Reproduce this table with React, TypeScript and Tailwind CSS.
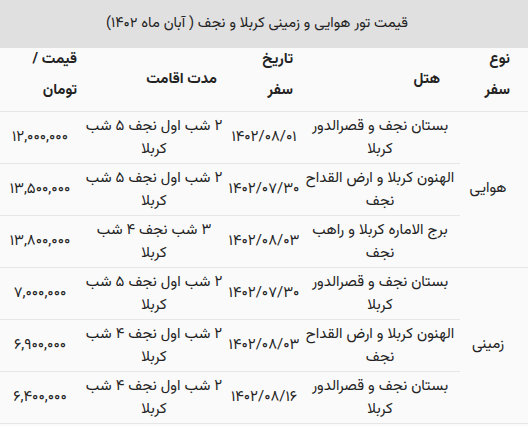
import React from "react";

type Row = { hotel: [string, string]; date: string; dur: [string, string]; price: string };

const air: Row[] = [
  { hotel: ["بستان نجف و قصرالدور", "کربلا"], date: "۱۴۰۲/۰۸/۰۱", dur: ["۲ شب اول نجف ۵ شب", "کربلا"], price: "۱۲,۰۰۰,۰۰۰" },
  { hotel: ["الهنون کربلا و ارض القداح", "نجف"], date: "۱۴۰۲/۰۷/۳۰", dur: ["۲ شب اول نجف ۵ شب", "کربلا"], price: "۱۳,۵۰۰,۰۰۰" },
  { hotel: ["برج الاماره کربلا و راهب", "نجف"], date: "۱۴۰۲/۰۸/۰۳", dur: ["۳ شب نجف ۴ شب", "کربلا"], price: "۱۳,۸۰۰,۰۰۰" },
];
const land: Row[] = [
  { hotel: ["بستان نجف و قصرالدور", "کربلا"], date: "۱۴۰۲/۰۷/۳۰", dur: ["۲ شب اول نجف ۵ شب", "کربلا"], price: "۷,۰۰۰,۰۰۰" },
  { hotel: ["الهنون کربلا و ارض القداح", "نجف"], date: "۱۴۰۲/۰۸/۰۳", dur: ["۲ شب اول نجف ۴ شب", "کربلا"], price: "۶,۹۰۰,۰۰۰" },
  { hotel: ["بستان نجف و قصرالدور", "کربلا"], date: "۱۴۰۲/۰۸/۱۶", dur: ["۲ شب اول نجف ۴ شب", "کربلا"], price: "۶,۴۰۰,۰۰۰" },
];

const cell = "h-[52px] border-b border-[#e6e6e6] flex flex-col items-center justify-center text-center leading-[23px] whitespace-nowrap";
const head = "h-[64px] border-b border-[#e6e6e6] flex flex-col justify-center items-start font-bold text-[15px] leading-[31px] whitespace-nowrap";

function Group({ label, rows }: { label: string; rows: Row[] }) {
  return (
    <>
      <div className="row-span-3 border-b border-[#e6e6e6] flex items-center justify-center pr-[12px]">{label}</div>
      {rows.map((r, i) => (
        <React.Fragment key={i}>
          <div className={cell}>
            <span>{r.hotel[0]}</span>
            <span>{r.hotel[1]}</span>
          </div>
          <div className={cell}>
            <span dir="ltr">{r.date}</span>
          </div>
          <div className={cell}>
            <span>{r.dur[0]}</span>
            <span>{r.dur[1]}</span>
          </div>
          <div className={cell}>
            <span>{r.price}</span>
          </div>
        </React.Fragment>
      ))}
    </>
  );
}

export default function App() {
  return (
    <div dir="rtl" className="w-[528px] h-[426px] bg-[#fafafa] text-[#222] text-[15px] overflow-hidden font-[Vazirmatn,sans-serif]">
      <div className="h-[48px] bg-[#e0e0e0] flex items-center justify-center pr-[14px] text-[14.6px]">
        قیمت تور هوایی و زمینی کربلا و نجف ( آبان ماه ۱۴۰۲)
      </div>
      <div className="grid grid-cols-[68px_160px_72px_148px_80px]">
        <div className={head + " pr-[18px] pb-[10px]"}>
          <span>نوع</span>
          <span>سفر</span>
        </div>
        <div className={head + " pr-[20px]"}>
          <span>هتل</span>
        </div>
        <div className={head + " pr-[7px] pb-[10px]"}>
          <span>تاریخ</span>
          <span>سفر</span>
        </div>
        <div className={head + " pr-[11px]"}>
          <span>مدت اقامت</span>
        </div>
        <div className={head + " pr-[3px] pb-[10px]"}>
          <span>قیمت /</span>
          <span>تومان</span>
        </div>
        <Group label="هوایی" rows={air} />
        <Group label="زمینی" rows={land} />
      </div>
    </div>
  );
}
